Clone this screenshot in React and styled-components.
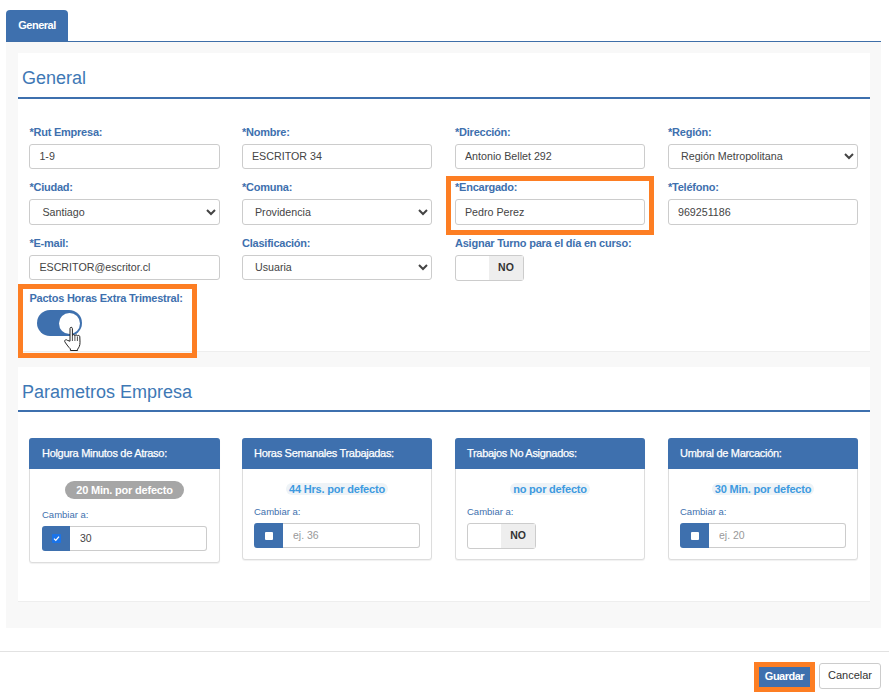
import React from 'react';
import styled, { createGlobalStyle } from 'styled-components';

const GlobalStyle = createGlobalStyle`
  html, body {
    margin: 0;
    padding: 0;
    background: #fff;
    font-family: "Liberation Sans", Arial, sans-serif;
  }
`;

const Page = styled.div`
  width: 889px;
  height: 697px;
  position: relative;
  overflow: hidden;
`;

const TabBar = styled.div`
  margin: 10px 8px 0 6px;
  height: 32px;
  box-sizing: border-box;
  border-bottom: 1px solid #3e6ea8;
  display: flex;
`;

const Tab = styled.div`
  width: 62px;
  height: 31px;
  background: #3e70ae;
  color: #fff;
  font-size: 11px;
  font-weight: bold;
  line-height: 30px;
  text-align: center;
  border-radius: 4px 4px 0 0;
  letter-spacing: -0.5px;
`;

const Panel = styled.div`
  margin: 0 8px 0 6px;
  height: 586px;
  box-sizing: border-box;
  background: #f8f8f8;
  padding: 11px 11px 0 12px;
  display: flex;
  flex-direction: column;
  gap: 15px;
`;

const Card = styled.section`
  background: #fff;
  height: ${p => p.$height}px;
  box-sizing: border-box;
  border-bottom: 1px solid #eee;
`;

const SectionTitle = styled.h2`
  margin: 0;
  height: ${p => p.$height}px;
  box-sizing: border-box;
  padding: 14px 0 0 4px;
  border-bottom: 2px solid #3e70ae;
  color: #3e78b5;
  font-size: 18px;
  font-weight: normal;
  line-height: 22px;
`;

const FormGrid = styled.div`
  display: grid;
  grid-template-columns: 212.6px 213px 213px 190px;
  grid-template-rows: 55px 56px 55px 55px;
  padding: 27px 12px 0 11.4px;
`;

const Field = styled.div`
  position: relative;
  display: flex;
  flex-direction: column;
`;

const Label = styled.label`
  height: 13px;
  margin-bottom: 5px;
  color: #3e70ae;
  font-size: 11px;
  font-weight: bold;
  line-height: 13px;
  letter-spacing: -0.23px;
  white-space: nowrap;
`;

const TextInput = styled.input`
  width: 190.4px;
  height: ${p => p.$tall ? 26 : 25}px;
  box-sizing: border-box;
  padding: 0 9px ${p => p.$tall ? 0 : 2}px;
  border: 1px solid #ccc;
  border-radius: 3px;
  color: #444;
  font: 10.7px "Liberation Sans", Arial, sans-serif;
  background: #fff;
`;

const Select = styled.select`
  width: 190.4px;
  height: ${p => p.$tall ? 26 : 25}px;
  box-sizing: border-box;
  padding: 0 8px ${p => p.$tall ? 0 : 2}px;
  border: 1px solid #ccc;
  border-radius: 3px;
  color: #444;
  font: 10.7px "Liberation Sans", Arial, sans-serif;
  background: #fff;
`;

const NoSwitch = styled.div`
  width: 69px;
  height: 26px;
  box-sizing: border-box;
  border: 1px solid #ccc;
  border-radius: 3px;
  background: #fff;
  display: flex;
  justify-content: flex-end;
`;

const NoLabel = styled.span`
  width: 34px;
  background: #eee;
  color: #333;
  font-size: 10.5px;
  font-weight: bold;
  line-height: 22px;
  text-align: center;
`;

const Toggle = styled.div`
  width: 45px;
  height: 26px;
  margin-left: 7.6px;
  border-radius: 13px;
  background: #3e70ae;
  position: relative;
`;

const ToggleKnob = styled.span`
  position: absolute;
  top: 2.5px;
  right: 2px;
  width: 21px;
  height: 21px;
  border-radius: 50%;
  background: #fff;
`;

const HandCursor = styled.svg`
  position: absolute;
  left: 26px;
  top: 16px;
  width: 20px;
  height: 26px;
`;

const Highlight = styled.div`
  position: absolute;
  left: ${p => p.$x}px;
  top: ${p => p.$y}px;
  width: ${p => p.$w}px;
  height: ${p => p.$h}px;
  box-sizing: border-box;
  border: 5px solid #fd7e23;
  pointer-events: none;
`;

const ParamGrid = styled.div`
  display: grid;
  grid-template-columns: repeat(4, 191px);
  column-gap: 22px;
  align-items: start;
  padding: 26px 11px 0 11px;
`;

const ParamCard = styled.div`
  width: ${p => p.$active ? 191 : 190}px;
  height: ${p => p.$active ? 125 : 122}px;
  box-sizing: border-box;
  border: 1px solid #ddd;
  border-radius: 3px;
  box-shadow: 0 1px 1px rgba(0, 0, 0, 0.06);
  background: #fff;
`;

const ParamHeader = styled.div`
  height: 31px;
  margin: -1px -1px 0;
  padding-left: ${p => p.$active ? 13 : 12}px;
  border-radius: 3px 3px 0 0;
  background: #3e70ae;
  color: #fff;
  font-size: 11px;
  line-height: 31px;
  letter-spacing: -0.3px;
  -webkit-text-stroke: 0.25px #fff;
`;

const ParamBody = styled.div`
  display: flex;
  flex-direction: column;
  padding: ${p => p.$active ? '12px 12px 0' : '14px 11px 0'};
`;

const Badge = styled.span`
  align-self: center;
  padding: 0 ${p => p.$active ? '11px' : '3px'};
  height: ${p => p.$active ? 18 : 12}px;
  border-radius: 9px;
  background: ${p => p.$active ? '#a6a6a6' : '#eef3f7'};
  color: ${p => p.$active ? '#fff' : '#3d9ae0'};
  font-size: 11px;
  font-weight: bold;
  line-height: ${p => p.$active ? 18 : 12}px;
  letter-spacing: -0.2px;
  white-space: nowrap;
`;

const ChangeLabel = styled.div`
  margin-top: ${p => p.$active ? 10 : 11}px;
  margin-bottom: 5px;
  height: 12px;
  color: #3e70ae;
  font-size: 9.5px;
  line-height: 12px;
`;

const InputGroup = styled.div`
  display: flex;
  width: ${p => p.$active ? 165 : 166}px;
  height: 25px;
`;

const Addon = styled.div`
  flex: 0 0 ${p => p.$active ? 28 : 29}px;
  background: #3e70ae;
  border-radius: 3px 0 0 3px;
  display: flex;
  align-items: center;
  justify-content: center;
`;

const Check = styled.span`
  width: ${p => p.$checked ? 9 : 8}px;
  height: ${p => p.$checked ? 9 : 8}px;
  border-radius: 1px;
  background: ${p => p.$checked ? '#1a73e8' : '#fff'};
  display: flex;
  align-items: center;
  justify-content: center;
`;

const GroupInput = styled.input`
  flex: 1;
  min-width: 0;
  box-sizing: border-box;
  padding: 0 10px 2px;
  border: 1px solid #ccc;
  border-left: 0;
  border-radius: 0 3px 3px 0;
  color: #444;
  font: 10.5px "Liberation Sans", Arial, sans-serif;
  &::placeholder {
    color: #999;
    opacity: 1;
  }
`;

const Footer = styled.footer`
  margin-top: 23px;
  height: 46px;
  box-sizing: border-box;
  border-top: 1px solid #e2e2e2;
  padding: 11px 8px 0 0;
  display: flex;
  justify-content: flex-end;
  gap: 9px;
`;

const SaveButton = styled.button`
  width: 51px;
  height: 20px;
  margin-top: 4px;
  border: 0;
  outline: 5px solid #fd7e23;
  background: #3e70ae;
  color: #fff;
  font: bold 11px "Liberation Sans", Arial, sans-serif;
  letter-spacing: -0.5px;
  padding: 0 0 3px;
`;

const CancelButton = styled.button`
  width: 62px;
  height: 26px;
  border: 1px solid #ccc;
  border-radius: 3px;
  background: #fff;
  color: #333;
  font: 11px "Liberation Sans", Arial, sans-serif;
  padding: 0 0 2px;
`;

const fields = [
  { label: '*Rut Empresa:', value: '1-9' },
  { label: '*Nombre:', value: 'ESCRITOR 34' },
  { label: '*Dirección:', value: 'Antonio Bellet 292' },
  { label: '*Región:', value: 'Región Metropolitana', select: true },
  { label: '*Ciudad:', value: 'Santiago', select: true, tall: true },
  { label: '*Comuna:', value: 'Providencia', select: true, tall: true },
  { label: '*Encargado:', value: 'Pedro Perez', tall: true },
  { label: '*Teléfono:', value: '969251186', tall: true },
  { label: '*E-mail:', value: 'ESCRITOR@escritor.cl' },
  { label: 'Clasificación:', value: 'Usuaria', select: true },
];

const params = [
  { title: 'Holgura Minutos de Atraso:', badge: '20 Min. por defecto', active: true, value: '30' },
  { title: 'Horas Semanales Trabajadas:', badge: '44 Hrs. por defecto', placeholder: 'ej. 36' },
  { title: 'Trabajos No Asignados:', badge: 'no por defecto', toggle: true },
  { title: 'Umbral de Marcación:', badge: '30 Min. por defecto', placeholder: 'ej. 20' },
];

const App = () => (
  <Page>
    <GlobalStyle />
    <TabBar>
      <Tab>General</Tab>
    </TabBar>
    <Panel>
      <Card $height={299}>
        <SectionTitle $height={46}>General</SectionTitle>
        <FormGrid>
          {fields.map(f => (
            <Field key={f.label}>
              <Label>{f.label}</Label>
              {f.select ? (
                <Select $tall={f.tall} defaultValue={f.value}>
                  <option>{f.value}</option>
                </Select>
              ) : (
                <TextInput $tall={f.tall} readOnly value={f.value} />
              )}
            </Field>
          ))}
          <Field>
            <Label>Asignar Turno para el día en curso:</Label>
            <NoSwitch>
              <NoLabel>NO</NoLabel>
            </NoSwitch>
          </Field>
          <Field />
          <Field>
            <Label>Pactos Horas Extra Trimestral:</Label>
            <Toggle>
              <ToggleKnob />
              <HandCursor viewBox="0 0 20 26">
                <path
                  d="M7 2.5c0-1.6 2.4-1.6 2.4 0v7.2c.2-1.4 2.4-1.4 2.5.1.2-1.3 2.4-1.2 2.5.3.3-1.1 2.3-.9 2.4.6l.2 5.6c.1 3.3-1.1 5.2-2.4 6.9v1.3H7.4v-1.6c-1.6-1.4-3.6-4.2-5.4-6.8-1.1-1.7.9-3.2 2.3-1.8L7 15.2z"
                  fill="#fff"
                  stroke="#222"
                  strokeWidth="1"
                  strokeLinejoin="round"
                />
                <path d="M9.4 10v5M11.9 10v5M14.4 10.5V15" stroke="#222" strokeWidth="0.8" fill="none" />
              </HandCursor>
            </Toggle>
          </Field>
        </FormGrid>
      </Card>
      <Card $height={235}>
        <SectionTitle $height={45}>Parametros Empresa</SectionTitle>
        <ParamGrid>
          {params.map(p => (
            <ParamCard key={p.title} $active={p.active}>
              <ParamHeader $active={p.active}>{p.title}</ParamHeader>
              <ParamBody $active={p.active}>
                <Badge $active={p.active}>{p.badge}</Badge>
                <ChangeLabel $active={p.active}>Cambiar a:</ChangeLabel>
                {p.toggle ? (
                  <NoSwitch>
                    <NoLabel>NO</NoLabel>
                  </NoSwitch>
                ) : (
                  <InputGroup $active={p.active}>
                    <Addon $active={p.active}>
                      <Check $checked={p.active}>
                        {p.active && (
                          <svg width="9" height="9" viewBox="0 0 9 9">
                            <path d="M2 4.6 3.8 6.4 7 2.6" stroke="#fff" strokeWidth="1.3" fill="none" />
                          </svg>
                        )}
                      </Check>
                    </Addon>
                    <GroupInput readOnly value={p.value} placeholder={p.placeholder} />
                  </InputGroup>
                )}
              </ParamBody>
            </ParamCard>
          ))}
        </ParamGrid>
      </Card>
    </Panel>
    <Footer>
      <SaveButton>Guardar</SaveButton>
      <CancelButton>Cancelar</CancelButton>
    </Footer>
    <Highlight $x={446} $y={176} $w={208} $h={59} />
    <Highlight $x={18} $y={284} $w={179} $h={74} />
  </Page>
);

export default App;
